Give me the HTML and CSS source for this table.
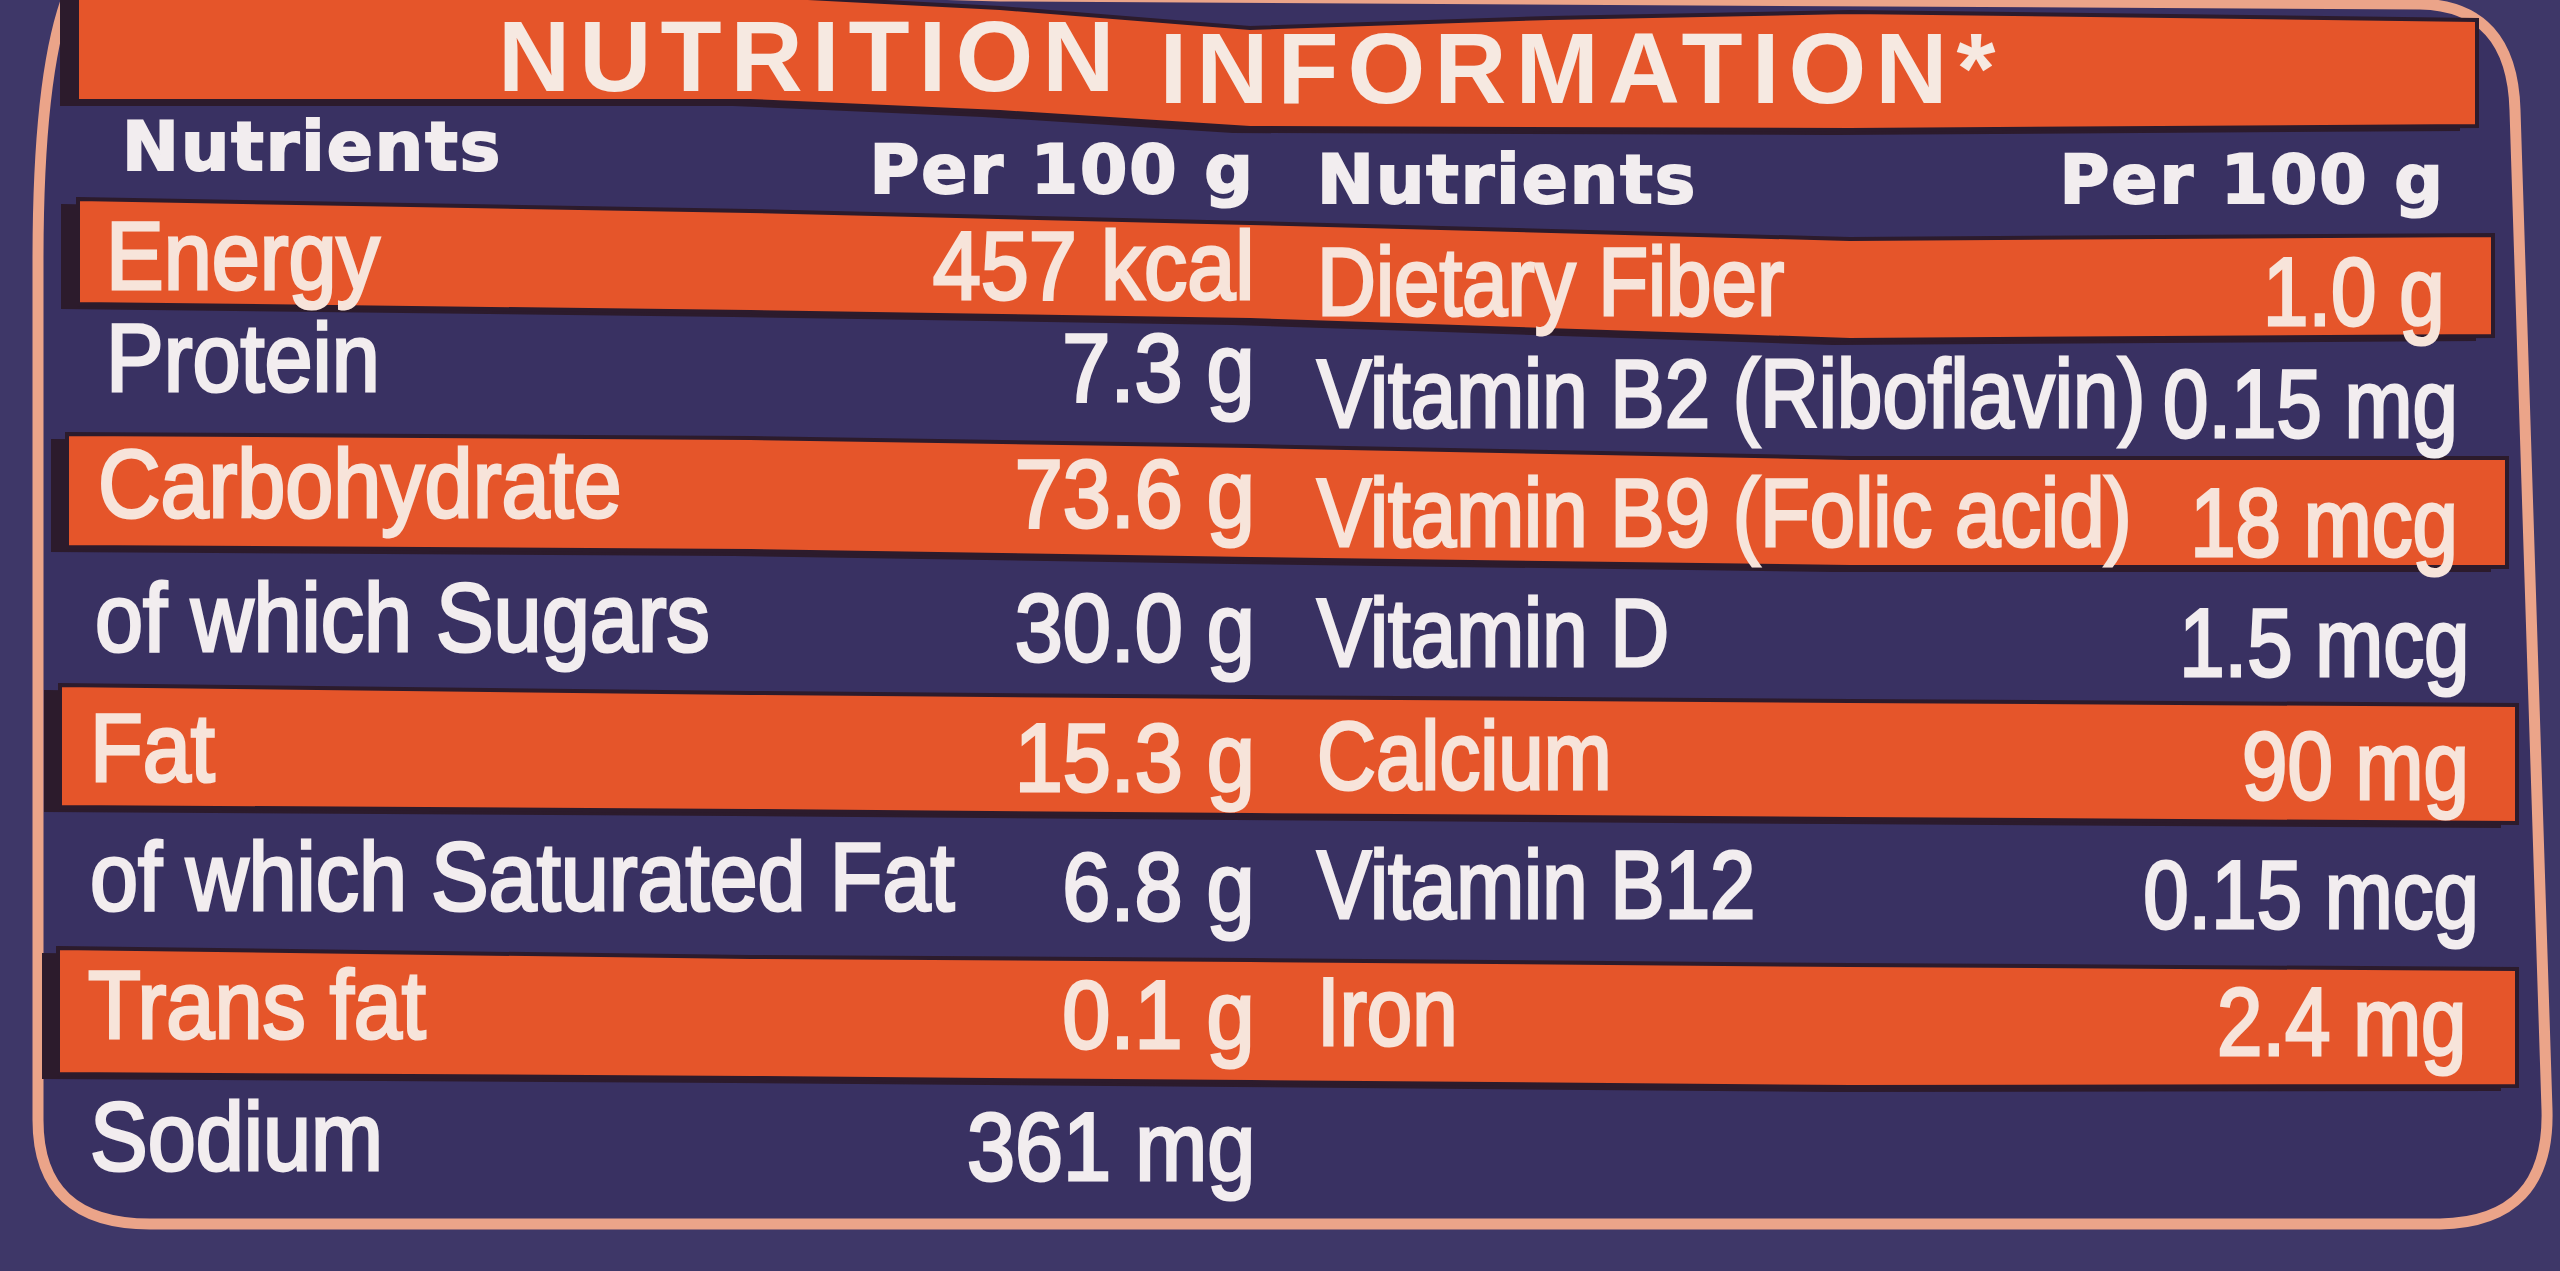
FILE: index.html
```html
<!DOCTYPE html>
<html lang="en">
<head>
<meta charset="utf-8">
<title>Nutrition Information</title>
<link rel="stylesheet" href="styles.css">
</head>
<body>
<div class="label">
  <div class="title"><span class="w1">NUTRITION</span><span class="w2">INFORMATION*</span></div>
  <div class="cols">
    <div class="col left">
      <div class="row head"><span class="k">Nutrients</span><span class="v">Per 100 g</span></div>
      <div class="row o"><span class="k">Energy</span><span class="v">457 kcal</span></div>
      <div class="row"><span class="k">Protein</span><span class="v">7.3 g</span></div>
      <div class="row o"><span class="k">Carbohydrate</span><span class="v">73.6 g</span></div>
      <div class="row"><span class="k">of which Sugars</span><span class="v">30.0 g</span></div>
      <div class="row o"><span class="k">Fat</span><span class="v">15.3 g</span></div>
      <div class="row"><span class="k">of which Saturated Fat</span><span class="v">6.8 g</span></div>
      <div class="row o"><span class="k">Trans fat</span><span class="v">0.1 g</span></div>
      <div class="row"><span class="k">Sodium</span><span class="v">361 mg</span></div>
    </div>
    <div class="col right">
      <div class="row head"><span class="k">Nutrients</span><span class="v">Per 100 g</span></div>
      <div class="row o"><span class="k">Dietary Fiber</span><span class="v">1.0 g</span></div>
      <div class="row"><span class="k">Vitamin B2 (Riboflavin)</span><span class="v">0.15 mg</span></div>
      <div class="row o"><span class="k">Vitamin B9 (Folic acid)</span><span class="v">18 mcg</span></div>
      <div class="row"><span class="k">Vitamin D</span><span class="v">1.5 mcg</span></div>
      <div class="row o"><span class="k">Calcium</span><span class="v">90 mg</span></div>
      <div class="row"><span class="k">Vitamin B12</span><span class="v">0.15 mcg</span></div>
      <div class="row o"><span class="k">Iron</span><span class="v">2.4 mg</span></div>
    </div>
  </div>
</div>
</body>
</html>
```

FILE: styles.css
```css
html, body {
  margin: 0;
  padding: 0;
}

body {
  width: 2560px;
  height: 1271px;
  overflow: hidden;
  font-family: "Liberation Sans", Arial, sans-serif;
  color: #f2edef;
  background-color: #3d3566;
  background-image: url("data:image/svg+xml,<svg xmlns='http://www.w3.org/2000/svg' width='2560' height='1271' viewBox='0 0 2560 1271'><rect width='2560' height='1271' fill='%233e3768'/><path d='M 80 -30 Q 38 40 38 260 L 38 1120 Q 38 1224 150 1224 L 2440 1224 Q 2550 1222 2547 1110 L 2515 110 Q 2512 6 2420 4 L 1000 -4 Z' fill='%23393162' stroke='%23eba489' stroke-width='11'/><g fill='%232c1b2c'><path transform='translate(-17 5)' d='M77 -5 L750 -5 L1000 8 L1250 28 L1550 18 L1850 12 L2477 20 L2477 126 L1850 130 L1250 128 L1000 112 L750 101 L77 101 Z'/><path transform='translate(-17 5)' d='M78 199 L750 211 L1250 223 L1850 239 L2493 235 L2493 336 L1850 340 L1250 320 L750 312 L78 304 Z'/><path transform='translate(-16 5)' d='M67 434 L750 438 L1250 446 L1850 458 L2507 458 L2507 567 L1850 567 L1250 559 L750 551 L67 547 Z'/><path transform='translate(-16 5)' d='M60 685 L750 693 L1250 697 L1850 701 L2517 705 L2517 823 L1850 819 L1250 815 L750 811 L60 807 Z'/><path transform='translate(-16 5)' d='M58 948 L750 957 L1250 960 L1850 965 L2517 969 L2517 1086 L1850 1087 L1250 1082 L750 1078 L58 1074 Z'/></g><g fill='%23e5552a' stroke='%232c1b2c' stroke-width='4'><path d='M77 -5 L750 -5 L1000 8 L1250 28 L1550 18 L1850 12 L2477 20 L2477 126 L1850 130 L1250 128 L1000 112 L750 101 L77 101 Z'/><path d='M78 199 L750 211 L1250 223 L1850 239 L2493 235 L2493 336 L1850 340 L1250 320 L750 312 L78 304 Z'/><path d='M67 434 L750 438 L1250 446 L1850 458 L2507 458 L2507 567 L1850 567 L1250 559 L750 551 L67 547 Z'/><path d='M60 685 L750 693 L1250 697 L1850 701 L2517 705 L2517 823 L1850 819 L1250 815 L750 811 L60 807 Z'/><path d='M58 948 L750 957 L1250 960 L1850 965 L2517 969 L2517 1086 L1850 1087 L1250 1082 L750 1078 L58 1074 Z'/></g></svg>");
  background-repeat: no-repeat;
  background-size: 2560px 1271px;
}

.label {
  display: flex;
  flex-direction: column;
}

/* ---------- title ---------- */
.title {
  height: 100px;
  display: flex;
  align-items: flex-start;
  gap: 36px;
  padding-left: 498px;
  font-size: 100px;
  font-weight: bold;
  line-height: 112px;
  letter-spacing: 9px;
  color: #f6e9e1;
  white-space: nowrap;
}

.w1,
.w2 {
  display: inline-block;
  height: 100px;
}

.w2 {
  margin-top: 12px;
  height: 88px;
}

/* ---------- columns ---------- */
.cols {
  display: flex;
  align-items: flex-start;
}

.col {
  box-sizing: border-box;
  display: flex;
  flex-direction: column;
}

.left {
  flex: none;
  width: 1265px;
  padding: 4px 10px 0 88px;
}

.right {
  flex: 1;
  min-width: 0;
  padding: 40px 78px 0 52px;
}

.row {
  display: flex;
  justify-content: space-between;
  align-items: center;
  font-size: 96px;
  line-height: 96px;
  white-space: nowrap;
}

.row.o {
  color: #f7e4da;
}

.k,
.v {
  display: inline-block;
  -webkit-text-stroke: 3px currentColor;
}

.k {
  flex: 0 1 auto;
  min-width: 0;
  transform: scaleX(0.9);
  transform-origin: left center;
}

.v {
  flex: none;
  padding-top: 20px;
  transform: scaleX(0.9);
  transform-origin: right center;
}

.right .k,
.right .v {
  transform: scaleX(0.85);
}

/* row heights and insets follow the printed bands */
.left .row:nth-child(1) { height: 98px; }
.left .row:nth-child(2) { height: 108px; padding-left: 18px; }
.left .row:nth-child(3) { height: 96px; padding-left: 18px; }
.left .row:nth-child(4) { height: 156px; padding-left: 10px; }
.left .row:nth-child(5) { height: 112px; padding-left: 7px; }
.left .row:nth-child(6) { height: 147px; padding-left: 2px; }
.left .row:nth-child(7) { height: 112px; padding-left: 2px; }
.left .row:nth-child(8) { height: 144px; }
.left .row:nth-child(9) { height: 119px; padding-left: 2px; }

.right .row:nth-child(1) { height: 89px; padding-right: 37px; }
.right .row:nth-child(2) { height: 106px; padding-right: 37px; }
.right .row:nth-child(3) { height: 118px; padding-right: 24px; }
.right .row:nth-child(4) { height: 120px; padding-right: 24px; }
.right .row:nth-child(5) { height: 119px; padding-right: 13px; }
.right .row:nth-child(6) { height: 127px; padding-right: 13px; }
.right .row:nth-child(7) { height: 131px; padding-right: 3px; }
.right .row:nth-child(8) { height: 124px; padding-right: 16px; }

/* ---------- header rows ---------- */
.row.head {
  font-family: "DejaVu Sans", "Liberation Sans", sans-serif;
  font-weight: bold;
  font-size: 68px;
  line-height: 68px;
  letter-spacing: 2px;
}

.head .k,
.head .v,
.right .head .k,
.right .head .v {
  transform: none;
  -webkit-text-stroke: 2px currentColor;
}

.left .head .k {
  padding-left: 34px;
  padding-bottom: 12px;
}

.left .head .v {
  padding-top: 34px;
}

.right .head .k,
.right .head .v {
  padding-top: 0;
  padding-bottom: 10px;
}
```
